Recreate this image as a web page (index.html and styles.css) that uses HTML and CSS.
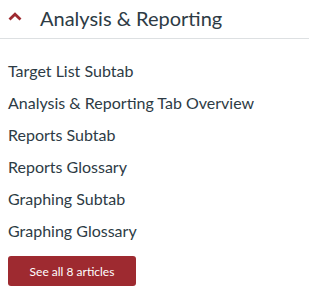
FILE: index.html
```html
<!DOCTYPE html>
<html lang="en">
  <head>
    <link rel="stylesheet" href="styles.css">
    <title>Analysis &amp; Reporting</title>
  </head>
  <body>
    <div class="section">
      <div class="section-header">
        <svg class="chevron" width="14" height="9" viewBox="0 0 14 9">
          <path d="M1.5 7.5 L7 2.2 L12.5 7.5" fill="none" stroke="#9e2a30" stroke-width="2.8"/>
        </svg>
        <h2>Analysis &amp; Reporting</h2>
      </div>
      <ul class="articles">
        <li><a href="#">Target List Subtab</a></li>
        <li><a href="#">Analysis &amp; Reporting Tab Overview</a></li>
        <li><a href="#">Reports Subtab</a></li>
        <li><a href="#">Reports Glossary</a></li>
        <li><a href="#">Graphing Subtab</a></li>
        <li><a href="#">Graphing Glossary</a></li>
      </ul>
      <a class="see-all" href="#">See all 8 articles</a>
    </div>
  </body>
</html>
```

FILE: styles.css
```css
body{
  margin: 0;
  background-color: #ffffff;
  font-family: Lato, 'Liberation Sans', sans-serif;
  color: #2d3b45;
}
.section-header{
  display: flex;
  align-items: center;
  height: 38px;
  padding-left: 8px;
  border-bottom: 1px solid #dde0e2;
}
.chevron{
  margin-top: -6px;
  margin-right: 18px;
}
.section-header h2{
  margin: 0;
  font-size: 20px;
  font-weight: normal;
  margin-top: -3px;
}
.articles{
  list-style: none;
  margin: 0;
  padding: 16px 8px 0 8px;
}
.articles li{
  height: 32px;
  font-size: 16px;
  line-height: 32px;
}
.articles a{
  color: #2d3b45;
  text-decoration: none;
}
.see-all{
  display: flex;
  justify-content: center;
  align-items: center;
  margin: 9px 0 0 8px;
  width: 128px;
  height: 30px;
  border-radius: 3px;
  background-color: #9e2a30;
  color: #ffffff;
  font-size: 12px;
  text-decoration: none;
}
```
